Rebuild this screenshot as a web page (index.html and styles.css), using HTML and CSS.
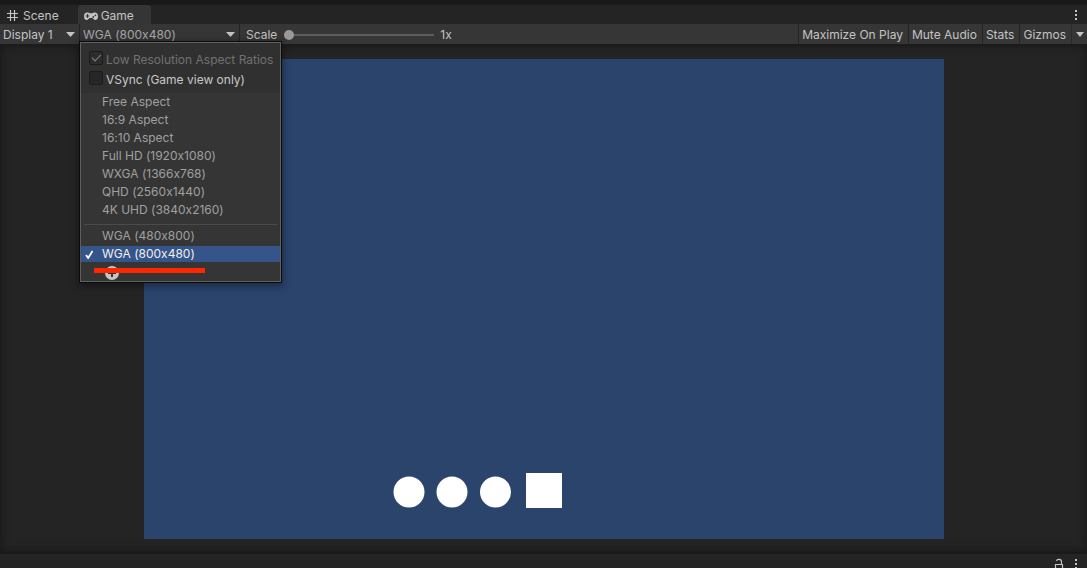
FILE: index.html
```html
<!DOCTYPE html>
<html lang="en">
<head>
<meta charset="utf-8">
<title>Game view</title>
<link rel="stylesheet" href="styles.css">
</head>
<body>
<div class="editor">
  <header class="tabs" role="tablist">
    <button class="tab" role="tab" aria-selected="false">
      <svg class="tab-icon" width="14" height="14" viewBox="0 0 14 14" aria-hidden="true"><path d="M4.500 1v11M8.500 1v11M1 4.500h11M1 8.500h11" fill="none" stroke="#c4c4c4" stroke-width="1.200"/></svg>
      Scene
    </button>
    <button class="tab tab-active" role="tab" aria-selected="true">
      <svg class="tab-icon" width="14" height="14" viewBox="0 0 14 14" aria-hidden="true"><path d="M3.500 3.500C1 3.500 0 5 0 7.200 0 9.500 1 11 2.700 11 4 11 4.700 9.800 5.400 9h3.200c.7.800 1.400 2 2.700 2C13 11 14 9.500 14 7.200 14 5 13 3.500 10.500 3.500c-1 0-1.500.5-2 .7h-3c-.5-.2-1-.7-2-.7z" fill="#c4c4c4"/><path d="M3.500 5v4M1.500 7h4" stroke="#383838" stroke-width="1.200"/><circle cx="9.300" cy="8" r=".9" fill="#383838"/><circle cx="11.400" cy="6.300" r=".9" fill="#383838"/></svg>
      Game
    </button>
    <button class="kebab" aria-label="Tab options"><svg width="4" height="12" viewBox="0 0 4 12" fill="#c4c4c4"><path d="M1 1h2v2H1zM1 5h2v2H1zM1 9h2v2H1z"/></svg></button>
  </header>

  <div class="toolbar">
    <label class="picker picker-display">
      <select aria-label="Display"><option>Display 1</option></select>
      <svg class="arrow" width="9" height="5" viewBox="0 0 9 5" aria-hidden="true"><path d="M0 0h9L4.500 5z" fill="#c4c4c4"/></svg>
    </label>
    <div class="aspect">
      <label class="picker picker-aspect">
        <select aria-label="Aspect"><option>WGA (800x480)</option></select>
        <svg class="arrow" width="9" height="5" viewBox="0 0 9 5" aria-hidden="true"><path d="M0 0h9L4.500 5z" fill="#c4c4c4"/></svg>
      </label>
      <div class="menu">
        <div class="menu-options">
          <label class="check check-disabled"><input type="checkbox" checked disabled>Low Resolution Aspect Ratios</label>
          <label class="check"><input type="checkbox">VSync (Game view only)</label>
        </div>
        <div class="menu-list">
          <button class="item">Free Aspect</button>
          <button class="item">16:9 Aspect</button>
          <button class="item">16:10 Aspect</button>
          <button class="item">Full HD (1920x1080)</button>
          <button class="item">WXGA (1366x768)</button>
          <button class="item">QHD (2560x1440)</button>
          <button class="item">4K UHD (3840x2160)</button>
        </div>
        <hr class="rule">
        <button class="item">WGA (480x800)</button>
        <button class="item item-selected"><svg class="tick" width="9" height="9" viewBox="0 0 9 9" aria-hidden="true"><path d="M1 5l2.200 3L7.500 1" fill="none" stroke="#fff" stroke-width="1.800"/></svg>WGA (800x480)</button>
        <div class="add-row">
          <button class="add" aria-label="Add"><svg width="14" height="14" viewBox="0 0 14 14"><circle cx="7" cy="7" r="7" fill="#c4c4c4"/><path d="M7 3v8M3 7h8" stroke="#353535" stroke-width="2"/></svg></button>
          <span class="mark"></span>
        </div>
      </div>
    </div>
    <label class="scale">Scale<input type="range" min="1" max="5" value="1"><output>1x</output></label>
    <div class="actions">
      <button class="action">Maximize On Play</button>
      <button class="action">Mute Audio</button>
      <button class="action">Stats</button>
      <button class="action">Gizmos</button>
      <button class="action-arrow" aria-label="Gizmo options"><svg width="8" height="5" viewBox="0 0 8 5"><path d="M0 0h8L4 5z" fill="#c4c4c4"/></svg></button>
    </div>
  </div>

  <main class="stage">
    <svg class="game" viewBox="0 0 800 480" role="img" aria-label="Game">
      <rect width="800" height="480" fill="#2a446c"/>
      <g fill="#fff"><circle cx="265" cy="433" r="15.500"/><circle cx="308" cy="433" r="15.500"/><circle cx="351.500" cy="433" r="15.500"/><rect x="382" y="414" width="36" height="35"/></g>
    </svg>
  </main>

  <footer class="dock">
    <button class="dock-button" aria-label="Lock"><svg width="10" height="12" viewBox="0 0 10 12"><path d="M1.500 6.500h7V12h-7zM7.500 6V3.500C7.500 1 3 .5 2.500 3" fill="none" stroke="#c4c4c4" stroke-width="1.200"/></svg></button>
    <button class="dock-button" aria-label="Panel options"><svg width="4" height="12" viewBox="0 0 4 12" fill="#c4c4c4"><path d="M1 1h2v2H1zM1 5h2v2H1zM1 9h2v2H1z"/></svg></button>
  </footer>
</div>
</body>
</html>
```
FILE: styles.css
```css
* { box-sizing: border-box; }

body {
  margin: 0;
  background: #242424;
  color: #c4c4c4;
  font: 12px/18px Inter, "Liberation Sans", sans-serif;
  font-feature-settings: "calt" 0;
}

button, select, input {
  margin: 0;
  padding: 0;
  border: 0;
  background: none;
  color: inherit;
  font: inherit;
  font-feature-settings: inherit;
}

svg { display: block; flex: none; }

.editor {
  display: flex;
  flex-direction: column;
  height: 100vh;
  overflow: hidden;
}

.tabs {
  display: flex;
  flex: none;
  height: 24px;
  border-top: 5px solid #191919;
  background: #242424;
}

.tab {
  display: flex;
  align-items: center;
  gap: 3px;
  padding: 2px 19px 0 6px;
}

.tab-active {
  padding-right: 17px;
  border-radius: 3px 3px 0 0;
  background: #353535;
}

.kebab {
  display: flex;
  align-items: center;
  margin-left: auto;
  padding-right: 9px;
}

.toolbar {
  display: flex;
  flex: none;
  height: 21px;
  border-bottom: 1px solid #1c1c1c;
  background: #363636;
}

.picker {
  display: grid;
  align-items: center;
  height: 20px;
  border-right: 1px solid #242424;
}

.picker > * { grid-area: 1 / 1; }
.picker-display { width: 80px; }
.picker-aspect { width: 160px; color: #a8a8a8; }

.picker select {
  width: 100%;
  padding: 2px 0 0 3px;
  appearance: none;
}

.arrow {
  justify-self: end;
  margin-right: 4px;
  pointer-events: none;
}

.aspect { position: relative; }

.menu {
  position: absolute;
  z-index: 2;
  top: 18px;
  left: 0;
  width: 201px;
  padding-bottom: 1px;
  border: 1px solid #606060;
  outline: 1px solid #0b0b0b;
  background: #353535;
  color: #a0a0a0;
  box-shadow: 0 2px 8px 2px rgba(0, 0, 0, .4);
}

.menu-options {
  padding: 7px 8px 3px;
  background: #303030;
}

.check {
  display: flex;
  align-items: center;
  gap: 3px;
  height: 20px;
  color: #c8c8c8;
  white-space: nowrap;
}

.check-disabled { color: #707070; }

.check input {
  display: grid;
  flex: none;
  place-items: center;
  width: 14px;
  height: 14px;
  margin-bottom: 4px;
  border: 1px solid #1c1c1c;
  border-radius: 2px;
  background: #262626;
  appearance: none;
}

.check-disabled input { background: #2c2c2c; }

.check input:checked::before {
  content: "";
  width: 8px;
  height: 4px;
  margin-bottom: 3px;
  border: solid #858585;
  border-width: 0 0 1px 1px;
  transform: rotate(-45deg);
}

.item {
  display: flex;
  align-items: center;
  width: 100%;
  height: 18px;
  padding-left: 21px;
  text-align: left;
}

.rule {
  height: 1px;
  margin: 5px 3px 2px;
  border: 0;
  background: #4b4b4b;
}

.item-selected {
  gap: 8px;
  height: 16px;
  margin-top: 1px;
  padding-left: 4px;
  background: #355489;
  color: #f0f0f0;
}

.add-row {
  display: grid;
  padding: 4px 0 0 13px;
}

.add-row > * { grid-area: 1 / 1; }
.add { justify-self: start; margin-left: 11px; }

.mark {
  width: 111px;
  height: 5px;
  margin-top: 2px;
  background: #ff2600;
}

.scale {
  display: flex;
  align-items: center;
  gap: 6px;
  padding: 2px 0 0 6px;
}

.scale input {
  width: 150px;
  height: 12px;
  margin-left: 1px;
  background: linear-gradient(#5e5e5e, #5e5e5e) center / 100% 2px no-repeat;
  appearance: none;
}

.scale input::-webkit-slider-thumb {
  width: 10px;
  height: 10px;
  border-radius: 50%;
  background: #999;
  appearance: none;
}

.actions {
  display: flex;
  margin-left: auto;
}

.action {
  padding: 2px 5px 0 3px;
  border-left: 1px solid #242424;
}

.action-arrow {
  padding: 0 3px 0 4px;
  border-left: 1px solid #2a2a2a;
}

.stage {
  display: flex;
  flex: 1;
  justify-content: center;
  min-height: 0;
  padding: 14px 0 13px;
  background: #242424;
  box-shadow: inset 0 0 10px #161616;
}

.game {
  height: 100%;
  aspect-ratio: 5 / 3;
}

.dock {
  display: flex;
  flex: none;
  justify-content: flex-end;
  gap: 10px;
  height: 16px;
  padding: 4px 9px 0 0;
  border-top: 2px solid #191919;
  overflow: hidden;
}

.dock-button { display: flex; }
```
